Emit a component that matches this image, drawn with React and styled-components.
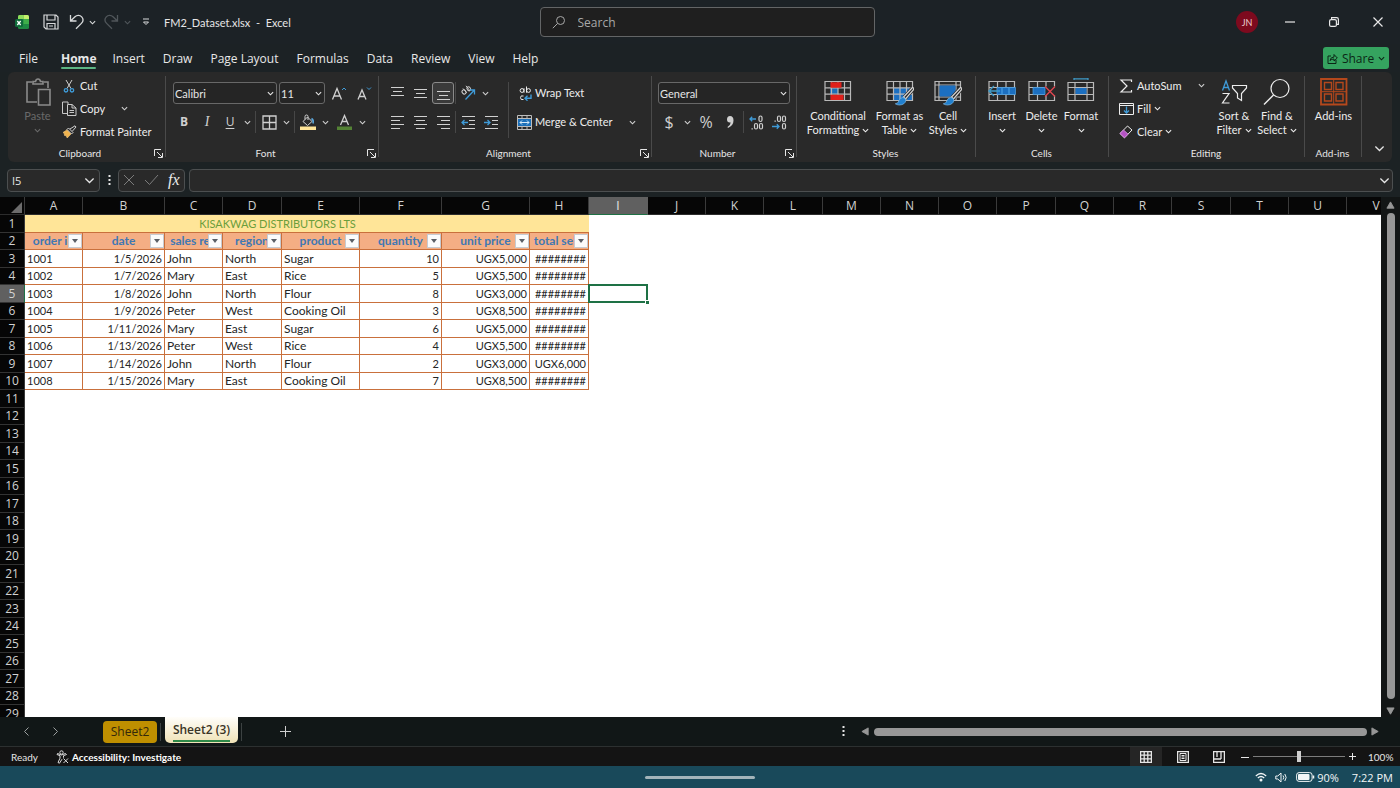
import React from "react";
import styled, { createGlobalStyle, css } from "styled-components";

const tabFont = '"Open Sans", "Noto Sans", sans-serif';
const uiFont = 'Lato, "Open Sans", sans-serif';
const cellFont = 'Lato, "Open Sans", sans-serif';

const Global = createGlobalStyle`
  *, *::before, *::after { box-sizing: border-box; }
  body { margin: 0; background: #1c2224; color: #e6e6e6; font-family: ${uiFont}; font-size: 11px; overflow: hidden; }
  button, input, select { font: inherit; color: inherit; margin: 0; padding: 0; border: 0; background: none; }
  button { cursor: pointer; }
`;

/* ---------- shell ---------- */
const Window = styled.div`
  display: flex;
  flex-direction: column;
  height: 100vh;
  background: #1c2224;
`;

const TitleBar = styled.header`
  display: grid;
  grid-template-columns: 1fr minmax(200px, 335px) 1fr;
  align-items: center;
  height: 44px;
  flex: none;
  padding-left: 14px;
  background: #1c2226;
`;

const TitleLeft = styled.div`
  display: flex;
  align-items: center;
`;

const QuickButton = styled.button`
  display: flex;
  align-items: center;
  justify-content: center;
  width: ${(p) => p.$w || 20}px;
  height: 22px;
  margin-left: ${(p) => p.$gap || 0}px;
  color: ${(p) => (p.$dim ? "#50565a" : "#d8dadb")};
`;

const DocTitle = styled.h1`
  margin: 0 0 0 8px;
  font-size: 11px;
  font-weight: 400;
  white-space: pre;
`;

const SearchBox = styled.label`
  display: flex;
  align-items: center;
  gap: 12px;
  height: 30px;
  padding: 0 12px 0 11px;
  border: 1px solid #636566;
  border-radius: 4px;
  background: #1f1f1f;
  color: #a8a8a8;
  font-family: ${tabFont};

  input {
    flex: 1;
    min-width: 0;
    outline: 0;
    font-size: 12px;
  }
  input::placeholder { color: #a8a8a8; opacity: 1; }
`;

const TitleRight = styled.div`
  display: flex;
  justify-content: flex-end;
  align-items: center;
`;

const Avatar = styled.button`
  width: 22px;
  height: 22px;
  margin-right: 10px;
  border-radius: 50%;
  background: #7d0a1e;
  color: #eccdd2;
  font-size: 9px;
`;

const WindowButton = styled.button`
  display: flex;
  align-items: center;
  justify-content: center;
  width: 44px;
  height: 30px;
  color: #e8e8e8;
`;

const TabBar = styled.nav`
  display: flex;
  align-items: center;
  height: 28px;
  flex: none;
  gap: 18px;
  padding: 0 11px 0 19px;
  font-family: ${tabFont};
  font-size: 12px;
  background: #1c2225;
`;

const MenuTab = styled.a`
  position: relative;
  padding-top: 2px;
  color: #e8e8e8;
  text-decoration: none;
  line-height: 20px;
  white-space: nowrap;
  ${(p) =>
    p.$active &&
    css`
      margin: 0 -2px 0 5px;
      font-weight: 700;
      &::after {
        content: "";
        position: absolute;
        left: 0;
        right: 0;
        bottom: 0;
        height: 2px;
        border-radius: 1px;
        background: #5cb584;
      }
    `}
`;

const ShareButton = styled.button`
  display: flex;
  align-items: center;
  justify-content: center;
  gap: 4px;
  width: 66px;
  height: 22px;
  margin-left: auto;
  border-radius: 3px;
  background: #35a35f;
  color: #0b2616;
`;

/* ---------- ribbon ---------- */
const Ribbon = styled.section`
  display: flex;
  flex: none;
  height: 90px;
  margin: 0 8px;
  border-radius: 6px;
  background: #292929;
`;

const GroupBox = styled.div`
  position: relative;
  display: flex;
  flex-direction: column;
  flex: none;
  width: ${(p) => p.$w}px;

  &::after {
    content: "";
    position: absolute;
    right: 0;
    top: 4px;
    bottom: 5px;
    width: 1px;
    background: #4a4a4a;
  }
`;

const GroupBody = styled.div`
  display: flex;
  height: 72px;
  padding: ${(p) => p.$pad || "2px 0 0 4px"};
`;

const GroupFooter = styled.div`
  display: flex;
  align-items: center;
  justify-content: center;
  height: 18px;
  padding-right: 2px;
  font-size: 10px;
  line-height: 16px;

  span { flex: 1; text-align: center; }
  button { display: flex; width: 12px; height: 12px; align-items: center; justify-content: center; }
`;

const Column = styled.div`
  display: flex;
  flex-direction: column;
  flex: none;
  width: ${(p) => (p.$w ? p.$w + "px" : "auto")};
  gap: ${(p) => p.$gap || 0}px;
`;

const Row = styled.div`
  display: flex;
  align-items: center;
  height: 22px;
  gap: ${(p) => (p.$gap === undefined ? 1 : p.$gap)}px;
`;

const IconButton = styled.button`
  display: flex;
  align-items: center;
  justify-content: center;
  flex: none;
  width: ${(p) => p.$w || 22}px;
  height: 22px;
  color: #d0d0d0;
  ${(p) =>
    p.$on &&
    css`
      border: 1px solid #8a8a8a;
      border-radius: 3px;
      background: #3a3a3a;
    `}
`;

const Split = styled.div`
  display: flex;
  flex: none;
  align-items: center;
  justify-content: space-between;
  width: ${(p) => (p.$w ? p.$w + "px" : "auto")};
`;

const Divider = styled.i`
  flex: none;
  width: 1px;
  height: ${(p) => p.$h || 22}px;
  margin: 0 ${(p) => (p.$m === undefined ? 1 : p.$m)}px;
  background: #474747;
`;

const LabelButton = styled.button`
  display: flex;
  align-items: center;
  gap: 3px;
  height: ${(p) => p.$h || 23}px;
  line-height: 16px;
  white-space: nowrap;
  color: #ededed;

  svg:first-child { flex: none; }
`;

const LargeButton = styled.button`
  display: flex;
  flex-direction: column;
  align-items: center;
  flex: none;
  width: ${(p) => p.$w}px;
  height: 70px;
  padding-top: 4px;
  line-height: 14px;
  color: ${(p) => (p.$dim ? "#6a6a6a" : "#ededed")};

  > svg { flex: none; margin-bottom: 3px; }
  span { display: flex; align-items: center; gap: 3px; height: 14px; white-space: nowrap; }
`;

const SelectBox = styled.label`
  display: grid;
  align-items: center;
  width: ${(p) => p.$w}px;
  height: 22px;
  border: 1px solid #686868;
  border-radius: 3px;
  background: #252525;

  select {
    grid-area: 1 / 1;
    width: 100%;
    height: 20px;
    padding-left: 1px;
    appearance: none;
    outline: 0;
  }
  svg { grid-area: 1 / 1; justify-self: end; margin-right: 2px; pointer-events: none; }
`;

const Letter = styled.span`
  font-family: ${(p) => (p.$italic ? '"Liberation Serif", serif' : tabFont)};
  font-size: ${(p) => p.$size || 12}px;
  line-height: 14px;
  font-weight: ${(p) => (p.$bold ? 700 : 400)};
  font-style: ${(p) => (p.$italic ? "italic" : "normal")};
  text-decoration: ${(p) => (p.$under ? "underline" : "none")};
  text-underline-offset: 2px;
`;

const CollapseButton = styled.button`
  display: flex;
  align-items: flex-end;
  justify-content: center;
  flex: 1;
  padding: 0 0 8px 4px;
`;

/* ---------- formula bar ---------- */
const FormulaBar = styled.div`
  display: flex;
  align-items: center;
  flex: none;
  height: 35px;
  padding: 1px 7px 0 7px;
`;

const NameBox = styled.label`
  display: flex;
  align-items: center;
  width: 93px;
  height: 23px;
  padding: 0 4px;
  border: 1px solid #4c4f50;
  border-radius: 4px;
  background: #292929;

  input { flex: 1; min-width: 0; outline: 0; font-family: ${tabFont}; }
`;

const DotsHandle = styled.button`
  display: flex;
  align-items: center;
  justify-content: center;
  width: 18px;
  height: 22px;
`;

const FormulaButtons = styled.div`
  display: flex;
  align-items: center;
  justify-content: space-around;
  width: 67px;
  height: 23px;
  border: 1px solid #4c4f50;
  border-radius: 4px;
  background: #292929;
  color: #7c7c7c;
  button { display: flex; }
`;

const FxText = styled.span`
  font: italic 400 16px/18px "Liberation Serif", serif;
  color: #ececec;
`;

const FormulaInput = styled.label`
  display: flex;
  flex: 1;
  align-items: center;
  height: 23px;
  margin-left: 4px;
  padding: 0 2px 0 4px;
  border: 1px solid #4c4f50;
  border-radius: 4px;
  background: #292929;
  input { flex: 1; min-width: 0; outline: 0; }
`;

/* ---------- sheet ---------- */
const SheetArea = styled.main`
  display: flex;
  flex: 1;
  min-height: 0;
`;

const SheetViewport = styled.div`
  flex: 1;
  min-width: 0;
  overflow: hidden;
  background: #fff;
`;

const Grid = styled.table`
  width: 0;
  table-layout: fixed;
  border-collapse: separate;
  border-spacing: 0;
  font-family: ${cellFont};
  font-size: 12px;
  color: #262626;

  tbody tr { height: 18px; }
  tbody tr:nth-child(even) { height: 17px; }
`;

const Col = styled.col`
  width: ${(p) => p.$w}px;
`;

const ColumnHead = styled.th`
  height: 18px;
  padding: 0;
  border-right: 1px solid ${(p) => (p.$on ? "#606060" : "#3a3a3a")};
  border-bottom: 1px solid ${(p) => (p.$on ? "#1e7145" : "#2c2c2c")};
  background: ${(p) => (p.$on ? "#606060" : "#060606")};
  color: ${(p) => (p.$on ? "#e8e8e8" : "#d2d2d2")};
  font: 400 12px/16px ${tabFont};
`;

const RowHead = styled.th`
  padding: 0;
  border-right: 1px solid ${(p) => (p.$on ? "#1e7145" : "#3a3a3a")};
  border-bottom: 1px solid #333;
  background: ${(p) => (p.$on ? "#606060" : "#060606")};
  color: #d2d2d2;
  font: 400 12px/16px ${tabFont};
`;

const Cell = styled.td`
  padding: 0 2px;
  overflow: hidden;
  white-space: nowrap;
  font-size: ${(p) => (p.$numeric ? 11 : 12)}px;
  line-height: 16px;
  text-align: ${(p) => p.$align || "left"};
  ${(p) =>
    p.$data &&
    css`
      border-right: 1px solid #c9703c;
      border-bottom: 1px solid #c9703c;
    `}
`;

const BannerCell = styled(Cell)`
  background: #ffe598;
  border-bottom: 1px solid #c9703c;
  color: #6b9e3c;
`;

const HeaderCell = styled.th`
  position: relative;
  padding: 0;
  overflow: hidden;
  border-right: 1px solid #c9703c;
  border-bottom: 1px solid #c9703c;
  background: #f4ae84;
  color: #3f78b4;
  font-weight: 700;
  line-height: 16px;
  white-space: nowrap;
`;

const FilterButton = styled.button`
  position: absolute;
  right: 0;
  top: 1px;
  display: flex;
  align-items: center;
  justify-content: center;
  width: 14px;
  height: 14px;
  border: 1px solid #c6cbd2;
  background: #fbfbfb;
`;

const SelectedCell = styled.td`
  position: relative;
  padding: 0;

  &::before {
    content: "";
    position: absolute;
    inset: -1px 0 0 -1px;
    border: 2px solid #1e7145;
  }
  &::after {
    content: "";
    position: absolute;
    right: -1px;
    bottom: -1px;
    width: 4px;
    height: 4px;
    border: 1px solid #fff;
    border-width: 1px 0 0 1px;
    background: #1e7145;
  }
`;

const VScroll = styled.div`
  display: flex;
  flex-direction: column;
  align-items: center;
  justify-content: space-between;
  flex: none;
  width: 19px;
  padding: 4px 0 1px;
  background: #131616;
`;

const Thumb = styled.div`
  flex: 1;
  border-radius: 4px;
  background: #979797;
  ${(p) => (p.$vertical ? "width: 8px; margin: 3px 0 8px;" : "height: 8px; margin: 0 4px;")}
`;

const ScrollArrow = styled.button`
  display: flex;
`;

/* ---------- bottom bars ---------- */
const SheetTabs = styled.div`
  display: flex;
  align-items: center;
  flex: none;
  height: 30px;
  padding: 0 20px 0 12px;
  border-bottom: 1px solid #2c3030;
  font-family: ${tabFont};
  background: #111717;
`;

const ArrowButton = styled.button`
  display: flex;
  align-items: center;
  justify-content: center;
  width: 29px;
  height: 22px;
  color: #9b9f9f;
`;

const SheetTab = styled.button`
  width: ${(p) => p.$w}px;
  height: 22px;
  border-radius: 4px;
  background: #bf8f00;
  color: #33280a;
  font-size: 12px;
  line-height: 18px;
  white-space: nowrap;
  ${(p) =>
    p.$active &&
    css`
      align-self: flex-start;
      height: 26px;
      border-radius: 0 0 5px 5px;
      background: linear-gradient(#fffefa, #f0e2b6);
      color: #3a3426;
      font-weight: 600;
      span { display: inline-block; padding-top: 2px; border-bottom: 2px solid #2f8a48; line-height: 20px; }
    `}
`;

const FirstTab = styled(SheetTab)`
  margin-left: 33px;
`;

const TabDivider = styled.i`
  width: 1px;
  height: 18px;
  margin: 0 4px 0 3px;
  background: #3c4242;
`;

const AddSheet = styled.button`
  display: flex;
  margin-left: 34px;
  color: #cfcfcf;
`;

const HScroll = styled.div`
  display: flex;
  align-items: center;
  width: calc(40% - 9px);
  margin-left: auto;
  button:first-child { margin-right: 11px; width: 8px; }
`;

const StatusBar = styled.footer`
  display: flex;
  align-items: center;
  flex: none;
  height: 19px;
  padding: 0 8px 0 11px;
  font-size: 10px;
  line-height: 16px;
  background: #141414;
`;

const AccessButton = styled.button`
  display: flex;
  align-items: center;
  gap: 3px;
  margin-left: 18px;
  font-weight: 700;
  color: #fff;
`;

const Spacer = styled.div`
  flex: 1;
`;

const ViewButton = styled.button`
  display: flex;
  align-items: center;
  justify-content: center;
  width: 32px;
  height: 19px;
  margin-right: ${(p) => p.$gap || 0}px;
  background: ${(p) => (p.$on ? "#252525" : "transparent")};
`;

const ZoomSlider = styled.input`
  && {
    width: 92px;
    height: 12px;
    margin: 0 4px;
    appearance: none;
    outline: 0;
  }
  &::-webkit-slider-runnable-track { height: 1px; background: #7c7c7c; }
  &::-webkit-slider-thumb {
    appearance: none;
    width: 4px;
    height: 11px;
    margin-top: -5px;
    background: #cfcfcf;
  }
`;

const ZoomButton = styled.button`
  display: flex;
`;

const ZoomValue = styled.button`
  && {
    width: 24px;
    margin-left: 12px;
  }
  white-space: nowrap;
`;

const TaskBar = styled.div`
  display: grid;
  grid-template-columns: 1fr 110px 1fr;
  align-items: center;
  flex: none;
  height: 22px;
  background: #19495a;
`;

const Grabber = styled.div`
  grid-column: 2;
  height: 3px;
  border-radius: 2px;
  background: #a3b4ba;
`;

const Tray = styled.div`
  display: flex;
  align-items: center;
  justify-content: flex-end;
  gap: 8px;
  padding-right: 7px;
  font-family: ${tabFont};
  font-size: 11px;
  white-space: nowrap;
  color: #f2f6f7;

  span { display: flex; align-items: center; gap: 2px; }
  time { margin-left: 5px; }
`;

/* ---------- icons ---------- */
const Svg = ({ w = 16, h = w, box, children, ...rest }) => (
  <svg width={w} height={h} viewBox={box || `0 0 ${w} ${h}`} fill="none" stroke="currentColor" strokeWidth="1" aria-hidden="true" {...rest}>
    {children}
  </svg>
);

const Chev = ({ w = 7 }) => (
  <Svg w={w} h={w} box="0 0 8 8">
    <path d="M1 2.500 4 5.500 7 2.500" strokeWidth={w > 8 ? 0.9 : 1.3} />
  </Svg>
);

const Launcher = () => (
  <Svg w={9}>
    <path d="M.5 7V.5H7M3 3l5 5M8.500 4v4.500H4" />
  </Svg>
);

const ExcelLogo = () => (
  <Svg w={16} stroke="none">
    <rect x="4" y="1" width="11" height="14" rx="1.500" fill="#1f8a43" />
    <path d="M5.500 1H9.500V5H4V2.500Q4 1 5.500 1Z" fill="#8fdc5a" />
    <path d="M9.500 1h4Q15 1 15 2.500V5H9.500z" fill="#c4f06c" />
    <rect x="9.500" y="5" width="5.500" height="5" fill="#3fae4a" />
    <rect x="1" y="5" width="8" height="8" rx="1.500" fill="#0f6b3a" />
    <path d="M3.300 7 6.700 11M6.700 7 3.300 11" stroke="#fff" strokeWidth="1.300" />
  </Svg>
);

const SaveIcon = () => (
  <Svg w={16}>
    <path d="M1 1h12l2 2v12H3l-2-2zM4 1v5h8V1M4 15V9.500h8V15M6 12h4" strokeWidth="1.200" />
  </Svg>
);

const UndoIcon = ({ flip }) => (
  <Svg w={15} h={16} transform={flip ? "scale(-1 1)" : undefined}>
    <path d="M1.500 1v6h6M1.800 6.800 6 2.700c2-1.900 5-1.700 6.700.2 1.700 2 1.500 4.700-.3 6.500L7 14.800" strokeWidth="1.300" />
  </Svg>
);

const CustomizeIcon = () => (
  <Svg w={8}>
    <path d="M1 1h6M1.500 4h5L4 6.500z" />
  </Svg>
);

const SearchIcon = () => (
  <Svg w={14}>
    <circle cx="8.500" cy="5.500" r="4" />
    <path d="M5.500 8.500.800 13.200" />
  </Svg>
);

const PasteIcon = () => (
  <Svg w={26} h={28} box="0 0 26 28" strokeWidth="1.600" stroke="#8a8a8a">
    <path d="M7 4H2v20h10M19 4h4v6" />
    <path d="M8 6V3.500h2.500Q11 1 13 1t2.500 2.500H18V6z" />
    <path d="M13.500 11.500H25V27H13.500z" />
  </Svg>
);

const CutIcon = () => (
  <Svg w={15} h={14} box="-1 0 15 14">
    <path d="M3 1 8 9.500M9 1 4 9.500" stroke="#cfcfcf" />
    <circle cx="3" cy="11.300" r="1.700" stroke="#3f9bd8" strokeWidth="1.300" />
    <circle cx="9" cy="11.300" r="1.700" stroke="#3f9bd8" strokeWidth="1.300" />
  </Svg>
);

const CopyIcon = () => (
  <Svg w={15} h={15} stroke="#c8c8c8">
    <path d="M5 12.500H.500V1H6v2" />
    <path d="M5.500 3.500H10L14 7v7.500H5.500zM10 3.500V7h4M7.500 9.500h4.500M7.500 11.500h4.500" />
  </Svg>
);

const PainterIcon = () => (
  <Svg w={15} h={14}>
    <path d="M8 4 13 .800l1 1.200-3.500 4" stroke="#d0d0d0" />
    <path d="M6.500 3 11 7.500 9.500 9 5 4.500z" fill="#292929" stroke="#d8d8d8" />
    <path d="M4.800 5 1 7.500l1.300 1 .2 2 1.700.3 1 2.200L9 9z" fill="#f0b34e" stroke="#f2c983" strokeWidth=".6" />
  </Svg>
);

const FontSizeIcon = ({ up }) => (
  <Svg w={16} h={15}>
    <path d={up ? "M1.500 13.500 6 2.500 10.500 13.500M3 10h6" : "M2 13.500 6 4 10 13.500M3.500 10.500h5"} strokeWidth="1.300" />
    <path d={up ? "M11 4 13 2l2 2" : "M11 1.500l2 2 2-2"} stroke="#3f9bd8" />
  </Svg>
);

const BordersIcon = () => (
  <Svg w={15}>
    <path d="M1 1h13v13H1zM7.500 1v13M1 7.500h13" strokeWidth="1.300" />
  </Svg>
);

const FillColorIcon = () => (
  <Svg w={16}>
    <path d="M3 7.500 7.500 3 12 7.500 7.500 11.500zM5 5.500V2.500Q5 1 6.500 1T8 2.500V6" />
    <path d="M11.500 4.500Q14 6 13 9.500" stroke="#5aa7dc" strokeWidth="1.500" />
    <rect x="0" y="12.500" width="16" height="3.500" fill="#ffe598" stroke="none" />
  </Svg>
);

const FontColorIcon = () => (
  <Svg w={15} h={16}>
    <path d="M3.500 11 7.500 1.500 11.500 11M5 7.500h5" strokeWidth="1.300" />
    <rect x="0" y="12.500" width="15" height="3.500" fill="#548235" stroke="none" />
  </Svg>
);

const alignPaths = {
  top: "M1 1.500h13M3 5.500h9M1 9.500h13",
  middle: "M1 3.500h13M3 7.500h9M1 11.500h13",
  bottom: "M1 5.500h13M3 9.500h9M1 13.500h13",
  left: "M1 1.500h13M1 5.500h9M1 9.500h13M1 13.500h9",
  center: "M1 1.500h13M3 5.500h9M1 9.500h13M3 13.500h9",
  right: "M1 1.500h13M5 5.500h9M1 9.500h13M5 13.500h9",
};
const AlignIcon = ({ kind }) => (
  <Svg w={15}>
    <path d={alignPaths[kind]} />
  </Svg>
);

const IndentIcon = ({ out }) => (
  <Svg w={15}>
    <path d="M1 1.500h13M8 5.500h6M8 9.500h6M1 13.500h13" />
    <path d={out ? "M7 7.500H1M3.500 5 1 7.500 3.500 10" : "M0 7.500h6M3.500 5 6 7.500 3.500 10"} stroke="#3f9bd8" strokeWidth="1.300" />
  </Svg>
);

const OrientationIcon = () => (
  <Svg w={16}>
    <ellipse cx="4" cy="7" rx="1.800" ry="2.200" transform="rotate(-40 4 7)" />
    <path d="M3 3.500 6.800 7.800M6 .800l4 5" />
    <ellipse cx="8.800" cy="3.800" rx="1.700" ry="2.100" transform="rotate(-40 8.800 3.800)" />
    <path d="M5.500 14.500 14 5.500M10 5h4.500v4.500" stroke="#3f9bd8" strokeWidth="1.300" />
  </Svg>
);

const WrapIcon = () => (
  <Svg w={15} h={15} box="-2 0 15 15">
    <circle cx="3" cy="4.500" r="1.900" />
    <path d="M5 2.300V6.700M7.500.500v6.200" />
    <circle cx="9.500" cy="4.500" r="1.900" />
    <path d="M4.500 10Q1.500 9 1.500 11.700T4.500 13.500" />
    <path d="M12 8.500v3.800H6M8.500 9.800 6 12.300l2.500 2.400" stroke="#3f9bd8" strokeWidth="1.400" />
  </Svg>
);

const MergeIcon = () => (
  <Svg w={15}>
    <path d="M.500.500h14v14H.500zM.500 3.500h14M.500 11.500h14M5 .500v3M10 .500v3M5 11.500v3M10 11.500v3" stroke="#bdbdbd" />
    <rect x="1" y="4" width="13" height="7" fill="#1c6fb8" stroke="none" />
    <path d="M3 7.500h9M5 5.500 3 7.500l2 2M10 5.500l2 2-2 2" stroke="#d5e9f8" />
  </Svg>
);

const DecimalIcon = ({ more }) => (
  <Svg w={16} h={15} strokeWidth="1.200">
    <path d={more ? "M8 4H2M4.200 1.800 2 4l2.200 2.200" : "M1 11.500h7M5.800 9.300 8 11.500l-2.200 2.200"} stroke="#3f9bd8" strokeWidth="1.300" />
    {more ? (
      <>
        <rect x="11" y="1" width="3" height="5.500" rx="1.500" />
        <rect x="6.500" y="8.500" width="3" height="5.500" rx="1.500" />
        <rect x="11.500" y="8.500" width="3" height="5.500" rx="1.500" />
        <path d="M3.500 13.800h1.300" />
      </>
    ) : (
      <>
        <rect x="6.500" y="1" width="3" height="5.500" rx="1.500" />
        <rect x="11.500" y="1" width="3" height="5.500" rx="1.500" />
        <rect x="11.500" y="8.500" width="3" height="5.500" rx="1.500" />
        <path d="M3.500 6.200h1.300" />
      </>
    )}
  </Svg>
);

const gridLines = "M1 3.500h25.500v19H1zM1 9.800h25.500M1 16.200h25.500M7.500 3.500v19M14 3.500v19M20.500 3.500v19";

const ConditionalIcon = () => (
  <Svg w={28} strokeWidth="1.200">
    <rect x="6" y="10" width="8" height="6" fill="#1c6fb8" stroke="none" />
    <path d={gridLines} stroke="#b9b9b9" />
    <path d="M6.500 4.200h11v5.500h-11zM6.500 16.800h13v5.200h-13z" fill="#e0201b" stroke="none" />
  </Svg>
);

const Brush = () => (
  <>
    <path d="M27 10.500 18.500 20" stroke="#292929" strokeWidth="5" />
    <path d="M26.500 9.500q2 .5.800 2.500L19.500 21l-2-2z" fill="#292929" stroke="#d6d6d6" />
    <path d="M16.800 19.500q3 .3 3 3-.8 4.300-6.500 4.500-3-.2-4-1.200 3-.3 3.500-2.800.8-3.200 4-3.500z" fill="#2180cf" stroke="#79b8e6" strokeWidth=".7" />
  </>
);

const FormatTableIcon = () => (
  <Svg w={28} strokeWidth="1.200">
    <path d="M8 10h18v12H8z" fill="#1c6fc0" stroke="none" />
    <path d={gridLines} stroke="#b9b9b9" />
    <Brush />
  </Svg>
);

const CellStylesIcon = () => (
  <Svg w={28} strokeWidth="1.200">
    <path d="M1 3.500h25.500v19H1zM1 7h25.500M1 19h25.500M5 3.500v19M22 3.500v19" stroke="#b9b9b9" />
    <path d="M5.500 7.500h16v11h-16z" fill="#1c6fc0" stroke="none" />
    <Brush />
  </Svg>
);

const InsertIcon = () => (
  <Svg w={28} strokeWidth="1.200">
    <path d="M1 3.500h25.500v19H1zM1 9.500h25.500M1 16.500h25.500M9.500 3.500v19M18 3.500v19" stroke="#b9b9b9" />
    <path d="M9 9.500h18.500v7H9z" fill="#1c6fc0" stroke="#4aa0e2" strokeWidth=".7" />
    <path d="M14 9.500v7M21 9.500v7" stroke="#4aa0e2" />
    <path d="M12 13H1M6 8 1 13l5 5" stroke="#3f9bc8" strokeWidth="1.400" />
  </Svg>
);

const DeleteIcon = () => (
  <Svg w={28} strokeWidth="1.200">
    <path d="M1 3.500h25.500v19H1zM1 9.500h25.500M1 16.500h25.500M9.500 3.500v19M18 3.500v19" stroke="#b9b9b9" />
    <path d="M16.500 8.500h12v9h-12z" fill="#292929" stroke="none" />
    <path d="M5 9.500h12v7H5z" fill="#1c6fc0" stroke="#4aa0e2" strokeWidth=".7" />
    <path d="M17 8.500 27 18.500M27 8.500 17 18.500" stroke="#e0454f" strokeWidth="1.400" />
  </Svg>
);

const FormatIcon = () => (
  <Svg w={28} strokeWidth="1.200">
    <path d="M1 4.500h25.500v18H1zM1 9.500h25.500M1 16.500h25.500M8 4.500v18M20 4.500v18" stroke="#b9b9b9" />
    <path d="M8.500 10h11v6h-11z" fill="#1c6fc0" stroke="none" />
    <path d="M7 .800h14M7 0v2M21 0v2" stroke="#3f9bc8" />
  </Svg>
);

const SigmaIcon = () => (
  <Svg w={15} h={14}>
    <path d="M12.500 3V1H2L8 7 2 13h10.500v-2" strokeWidth="1.200" />
  </Svg>
);

const FillIcon = () => (
  <Svg w={15} h={14}>
    <path d="M.500 1.500h14v11H.500zM.500 3.500h14" />
    <path d="M7.500 4.500v6.500M5 8.500 7.500 11 10 8.500" stroke="#3f9bd8" strokeWidth="1.300" />
  </Svg>
);

const ClearIcon = () => (
  <Svg w={15} h={14}>
    <path d="M1 8.500 8.500 1 13 5 5.500 12.800z" />
    <path d="M1 8.500 4.500 5 9 9.200 5.500 12.800z" fill="#b552c4" stroke="#cf86d9" />
  </Svg>
);

const SortIcon = () => (
  <Svg w={28}>
    <path d="M2.500 12.500 6 3l3.500 9.500M3.700 9.500h4.600" stroke="#3f9bd8" strokeWidth="1.300" />
    <path d="M2.500 15.500H9l-6.500 9.500h7" strokeWidth="1.200" />
    <path d="M12.500 7.500h14V10L21.500 15.500v7l-4-2.500v-4.500l-5-5.500z" strokeWidth="1.200" />
  </Svg>
);

const FindIcon = () => (
  <Svg w={28} h={28}>
    <circle cx="17" cy="10.500" r="9" strokeWidth="1.200" />
    <path d="M10.500 17 1 26.500" strokeWidth="1.400" />
  </Svg>
);

const AddinsIcon = () => (
  <Svg w={28} stroke="#b5481c">
    <path d="M1 1h25.500v25.500H1z" strokeWidth="1.800" />
    <path d="M4.500 4.500h7v7h-7zM16 4.500h7v7h-7zM4.500 16h7v7h-7zM16 16h7v7h-7z" strokeWidth="1.400" />
    <path d="M13.700 2v24M2 13.700h24" strokeWidth="1" />
  </Svg>
);

const Dots = () => (
  <Svg w={3} h={11} fill="currentColor" stroke="none">
    <rect x=".5" y="0" width="2" height="2" />
    <rect x=".5" y="4" width="2" height="2" />
    <rect x=".5" y="8" width="2" height="2" />
  </Svg>
);

const arrowPoints = { up: "M5 1 9 8H1z", down: "M1 1h8L5 8z", left: "M8 1v8L1 5z", right: "M1 1v8l7-4z" };
const Arrow = ({ dir }) => (
  <Svg w={9} box="0 0 10 10" fill="#979797" stroke="#979797" strokeLinejoin="round">
    <path d={arrowPoints[dir]} />
  </Svg>
);

/* ---------- ribbon groups ---------- */
const Group = ({ name, w, pad, launch, children }) => (
  <GroupBox $w={w} role="group" aria-label={name}>
    <GroupBody $pad={pad}>{children}</GroupBody>
    <GroupFooter>
      <span>{name}</span>
      {launch && (
        <button aria-label={`${name} settings`}>
          <Launcher />
        </button>
      )}
    </GroupFooter>
  </GroupBox>
);

const DropButton = ({ w = 12, label }) => (
  <IconButton $w={w} aria-label={label}>
    <Chev />
  </IconButton>
);

const DropSelect = ({ w, label, value }) => (
  <SelectBox $w={w}>
    <select aria-label={label} defaultValue={value}>
      <option>{value}</option>
    </select>
    <Chev />
  </SelectBox>
);

const Big = ({ w, icon, lines, drop }) => (
  <LargeButton $w={w}>
    {icon}
    {lines.map((line, i) => (
      <span key={i}>
        {line}
        {drop && i === lines.length - 1 && <Chev />}
      </span>
    ))}
  </LargeButton>
);

const RibbonBar = () => (
  <Ribbon aria-label="Home ribbon">
    <Group name="Clipboard" w={158} pad="2px 0 0 5px" launch>
      <LargeButton $w={49} $dim>
        <PasteIcon />
        <span>Paste</span>
        <span><Chev /></span>
      </LargeButton>
      <Column>
        <LabelButton><CutIcon />Cut</LabelButton>
        <Split $w={68}>
          <LabelButton><CopyIcon />Copy</LabelButton>
          <DropButton label="Copy options" />
        </Split>
        <LabelButton><PainterIcon />Format Painter</LabelButton>
      </Column>
    </Group>

    <Group name="Font" w={213} pad="10px 0 0 7px" launch>
      <Column $gap={7}>
        <Row $gap={2}>
          <DropSelect w={104} label="Font name" value="Calibri" />
          <DropSelect w={46} label="Font size" value="11" />
          <IconButton $w={23} aria-label="Increase font size"><FontSizeIcon up /></IconButton>
          <IconButton $w={23} aria-label="Decrease font size"><FontSizeIcon /></IconButton>
        </Row>
        <Row>
          <IconButton aria-label="Bold"><Letter $bold>B</Letter></IconButton>
          <IconButton aria-label="Italic"><Letter $italic $size={14}>I</Letter></IconButton>
          <Split>
            <IconButton aria-label="Underline"><Letter $under>U</Letter></IconButton>
            <DropButton label="Underline options" />
          </Split>
          <Divider />
          <Split>
            <IconButton aria-label="Borders"><BordersIcon /></IconButton>
            <DropButton label="Border options" />
          </Split>
          <Divider />
          <Split>
            <IconButton aria-label="Fill color"><FillColorIcon /></IconButton>
            <DropButton label="Fill color options" />
          </Split>
          <Split>
            <IconButton $w={24} aria-label="Font color"><FontColorIcon /></IconButton>
            <DropButton label="Font color options" />
          </Split>
        </Row>
      </Column>
    </Group>

    <Group name="Alignment" w={273} pad="10px 0 0 7px" launch>
      <Column $w={122} $gap={7}>
        <Row>
          <IconButton aria-label="Top align"><AlignIcon kind="top" /></IconButton>
          <IconButton aria-label="Middle align"><AlignIcon kind="middle" /></IconButton>
          <IconButton $on aria-label="Bottom align"><AlignIcon kind="bottom" /></IconButton>
          <Divider $m={0} />
          <Split>
            <IconButton aria-label="Orientation"><OrientationIcon /></IconButton>
            <DropButton label="Orientation options" />
          </Split>
        </Row>
        <Row>
          <IconButton aria-label="Align left"><AlignIcon kind="left" /></IconButton>
          <IconButton aria-label="Center"><AlignIcon kind="center" /></IconButton>
          <IconButton aria-label="Align right"><AlignIcon kind="right" /></IconButton>
          <Divider $m={0} />
          <IconButton aria-label="Decrease indent"><IndentIcon out /></IconButton>
          <IconButton aria-label="Increase indent"><IndentIcon /></IconButton>
        </Row>
      </Column>
      <Divider $h={56} $m={0} />
      <Column $gap={7}>
        <Row $gap={8}>
          <i />
          <LabelButton $h={22}><WrapIcon />Wrap Text</LabelButton>
        </Row>
        <Row $gap={8}>
          <i />
          <Split $w={121}>
            <LabelButton $h={22}><MergeIcon />Merge &amp; Center</LabelButton>
            <DropButton label="Merge options" />
          </Split>
        </Row>
      </Column>
    </Group>

    <Group name="Number" w={145} pad="10px 0 0 6px" launch>
      <Column $gap={7}>
        <DropSelect w={132} label="Number format" value="General" />
        <Row>
          <Split>
            <IconButton aria-label="Currency"><Letter $size={16}>$</Letter></IconButton>
            <DropButton w={14} label="Currency options" />
          </Split>
          <IconButton aria-label="Percent"><Letter $size={16}>%</Letter></IconButton>
          <IconButton $w={24} aria-label="Comma style">
            <Svg w={8} h={14} fill="currentColor" stroke="none"><path d="M4 1q3.500 0 3.500 4.500 0 5-5.500 7.500l-.5-1Q4.500 10 4.700 7.500 1 8 1 4.500 1 1 4 1z" /></Svg>
          </IconButton>
          <Divider $m={0} />
          <IconButton aria-label="Increase decimal"><DecimalIcon more /></IconButton>
          <IconButton aria-label="Decrease decimal"><DecimalIcon /></IconButton>
        </Row>
      </Column>
    </Group>

    <Group name="Styles" w={179} pad="2px 0 0 5px">
      <Big w={72} icon={<ConditionalIcon />} lines={["Conditional", "Formatting"]} drop />
      <Big w={51} icon={<FormatTableIcon />} lines={["Format as", "Table"]} drop />
      <Big w={46} icon={<CellStylesIcon />} lines={["Cell", "Styles"]} drop />
    </Group>

    <Group name="Cells" w={133} pad="2px 0 0 6px">
      <Big w={40} icon={<InsertIcon />} lines={["Insert", ""]} drop />
      <Big w={39} icon={<DeleteIcon />} lines={["Delete", ""]} drop />
      <Big w={40} icon={<FormatIcon />} lines={["Format", ""]} drop />
    </Group>

    <Group name="Editing" w={196} pad="2px 0 0 10px">
      <Column $w={94}>
        <Split $w={88}>
          <LabelButton><SigmaIcon />AutoSum</LabelButton>
          <DropButton label="AutoSum options" />
        </Split>
        <LabelButton><FillIcon />Fill<Chev /></LabelButton>
        <LabelButton><ClearIcon />Clear<Chev /></LabelButton>
      </Column>
      <Big w={42} icon={<SortIcon />} lines={["Sort &", "Filter"]} drop />
      <Big w={44} icon={<FindIcon />} lines={["Find &", "Select"]} drop />
    </Group>

    <Group name="Add-ins" w={57} pad="2px 0 0 0">
      <Big w={57} icon={<AddinsIcon />} lines={["Add-ins"]} />
    </Group>

    <CollapseButton aria-label="Collapse ribbon">
      <Chev w={11} />
    </CollapseButton>
  </Ribbon>
);

/* ---------- sheet data ---------- */
const columns = [
  ["A", 58], ["B", 82], ["C", 58], ["D", 59], ["E", 78], ["F", 82], ["G", 88], ["H", 59], ["I", 59],
  ["J", 58], ["K", 58], ["L", 59], ["M", 58], ["N", 58], ["O", 58], ["P", 59], ["Q", 58], ["R", 58],
  ["S", 59], ["T", 58], ["U", 58], ["V", 59],
];
const headers = ["order id", "date", "sales rep", "region", "product", "quantity", "unit price", "total sells"];
const aligns = ["left", "right", "left", "left", "left", "right", "right", "right"];
const numericColumns = [0, 1, 5, 6, 7];
const records = [
  ["1001", "1/5/2026", "John", "North", "Sugar", "10", "UGX5,000", "########"],
  ["1002", "1/7/2026", "Mary", "East", "Rice", "5", "UGX5,500", "########"],
  ["1003", "1/8/2026", "John", "North", "Flour", "8", "UGX3,000", "########"],
  ["1004", "1/9/2026", "Peter", "West", "Cooking Oil", "3", "UGX8,500", "########"],
  ["1005", "1/11/2026", "Mary", "East", "Sugar", "6", "UGX5,000", "########"],
  ["1006", "1/13/2026", "Peter", "West", "Rice", "4", "UGX5,500", "########"],
  ["1007", "1/14/2026", "John", "North", "Flour", "2", "UGX3,000", "UGX6,000"],
  ["1008", "1/15/2026", "Mary", "East", "Cooking Oil", "7", "UGX8,500", "########"],
];
const emptyRows = Array.from({ length: 19 }, (_, i) => i + 11);

const SelectAllMark = styled.svg`
  display: block;
`;

const Sheet = () => (
  <Grid>
    <colgroup>
      <Col $w={25} />
      {columns.map(([name, w]) => <Col key={name} $w={w} />)}
    </colgroup>
    <thead>
      <tr>
        <ColumnHead aria-label="Select all">
          <SelectAllMark width="24" height="16" viewBox="0 0 24 16"><path d="M22 4v11H11z" fill="#6c6c6c" /></SelectAllMark>
        </ColumnHead>
        {columns.map(([name]) => <ColumnHead key={name} $on={name === "I"}>{name}</ColumnHead>)}
      </tr>
    </thead>
    <tbody>
      <tr>
        <RowHead>1</RowHead>
        <BannerCell colSpan={7} $numeric $align="center">KISAKWAG DISTRIBUTORS LTS</BannerCell>
        <BannerCell />
      </tr>
      <tr>
        <RowHead>2</RowHead>
        {headers.map((h) => (
          <HeaderCell key={h}>
            {h}
            <FilterButton aria-label={`Filter ${h}`}>
              <Svg w={6} h={4} stroke="none"><path d="M0 0h6L3 4z" fill="#5a5f66" /></Svg>
            </FilterButton>
          </HeaderCell>
        ))}
      </tr>
      {records.map((rec, r) => (
        <tr key={rec[0]}>
          <RowHead $on={r === 2}>{r + 3}</RowHead>
          {rec.map((value, c) => (
            <Cell key={c} $data $align={aligns[c]} $numeric={numericColumns.includes(c)}>{value}</Cell>
          ))}
          {r === 2 && <SelectedCell />}
        </tr>
      ))}
      {emptyRows.map((n) => (
        <tr key={n}>
          <RowHead>{n}</RowHead>
        </tr>
      ))}
    </tbody>
  </Grid>
);

const menu = ["File", "Home", "Insert", "Draw", "Page Layout", "Formulas", "Data", "Review", "View", "Help"];

export default function App() {
  return (
    <Window>
      <Global />
      <TitleBar>
        <TitleLeft>
          <ExcelLogo />
          <QuickButton $gap={11} aria-label="Save"><SaveIcon /></QuickButton>
          <QuickButton $gap={5} aria-label="Undo"><UndoIcon /></QuickButton>
          <QuickButton $w={12} aria-label="Undo history"><Chev /></QuickButton>
          <QuickButton $gap={3} $dim aria-label="Redo"><UndoIcon flip /></QuickButton>
          <QuickButton $w={12} $dim aria-label="Redo history"><Chev /></QuickButton>
          <QuickButton $w={20} $gap={3} aria-label="Customize toolbar"><CustomizeIcon /></QuickButton>
          <DocTitle>FM2_Dataset.xlsx  -  Excel</DocTitle>
        </TitleLeft>
        <SearchBox>
          <SearchIcon />
          <input type="text" placeholder="Search" aria-label="Search" />
        </SearchBox>
        <TitleRight>
          <Avatar>JN</Avatar>
          <WindowButton aria-label="Minimize"><Svg w={10}><path d="M0 5h10" strokeWidth="1.200" /></Svg></WindowButton>
          <WindowButton aria-label="Restore">
            <Svg w={10}><rect x=".6" y="2.600" width="6.800" height="6.800" rx="1.500" strokeWidth="1.200" /><path d="M2.600 2V.600h5q1.800 0 1.800 1.800v5H8" strokeWidth="1.200" /></Svg>
          </WindowButton>
          <WindowButton aria-label="Close"><Svg w={10}><path d="M.5.5l9 9M9.500.5l-9 9" strokeWidth="1.200" /></Svg></WindowButton>
        </TitleRight>
      </TitleBar>
      <TabBar aria-label="Ribbon tabs">
        {menu.map((m) => <MenuTab key={m} href="#" $active={m === "Home"}>{m}</MenuTab>)}
        <ShareButton>
          <Svg w={11}><path d="M4 3H1v7.500h8V7M3 7.500Q3.500 4 7 4V1.500L10.300 5 7 8V6Q4.500 6 3 7.500z" /></Svg>
          Share
          <Chev />
        </ShareButton>
      </TabBar>
      <RibbonBar />
      <FormulaBar>
        <NameBox>
          <input type="text" defaultValue="I5" aria-label="Name box" />
          <Chev w={11} />
        </NameBox>
        <DotsHandle aria-label="Resize name box"><Dots /></DotsHandle>
        <FormulaButtons>
          <button aria-label="Cancel"><Svg w={12}><path d="M1 1l10 10M11 1 1 11" /></Svg></button>
          <button aria-label="Enter"><Svg w={15} h={12}><path d="M1 6l4.500 4.500L14 1" /></Svg></button>
          <button aria-label="Insert function"><FxText>fx</FxText></button>
        </FormulaButtons>
        <FormulaInput>
          <input type="text" aria-label="Formula" />
          <Chev w={11} />
        </FormulaInput>
      </FormulaBar>
      <SheetArea>
        <SheetViewport><Sheet /></SheetViewport>
        <VScroll>
          <ScrollArrow aria-label="Scroll up"><Arrow dir="up" /></ScrollArrow>
          <Thumb $vertical />
          <ScrollArrow aria-label="Scroll down"><Arrow dir="down" /></ScrollArrow>
        </VScroll>
      </SheetArea>
      <SheetTabs>
        <ArrowButton aria-label="Previous sheet"><Svg w={7} h={9}><path d="M5.500.5 1.500 4.500l4 4" /></Svg></ArrowButton>
        <ArrowButton aria-label="Next sheet"><Svg w={7} h={9}><path d="M1.500.5l4 4-4 4" /></Svg></ArrowButton>
        <FirstTab $w={54}>Sheet2</FirstTab>
        <TabDivider />
        <SheetTab $w={73} $active><span>Sheet2 (3)</span></SheetTab>
        <TabDivider />
        <AddSheet aria-label="New sheet"><Svg w={11}><path d="M5.500 0v11M0 5.500h11" /></Svg></AddSheet>
        <HScroll>
          <ScrollArrow aria-label="Resize tab bar"><Dots /></ScrollArrow>
          <ScrollArrow aria-label="Scroll left"><Arrow dir="left" /></ScrollArrow>
          <Thumb />
          <ScrollArrow aria-label="Scroll right"><Arrow dir="right" /></ScrollArrow>
        </HScroll>
      </SheetTabs>
      <StatusBar>
        <span>Ready</span>
        <AccessButton>
          <Svg w={13} h={14} stroke="#dcdcdc">
            <circle cx="5.500" cy="2.500" r="1.700" />
            <path d="M1 4.500l3 1.200v2.500L2 12.500l1.500.7 2.500-4M10.500 4.500l-3 1.200v2M1 4.500l.5-1L5.500 5l4-1.500 1 1M7.500 8.500l4.500 4.500M12 8.500 7.500 13" />
          </Svg>
          Accessibility: Investigate
        </AccessButton>
        <Spacer />
        <ViewButton $on $gap={5} aria-label="Normal view"><Svg w={12} strokeWidth="1.300"><path d="M.6.6h10.800v10.800H.6zM4.200.6v10.800M7.800.6v10.800M.6 4.200h10.800M.6 7.800h10.800" /></Svg></ViewButton>
        <ViewButton $gap={4} aria-label="Page layout view"><Svg w={12}><path d="M.6.6h10.800v10.800H.6z" strokeWidth="1.300" /><path d="M3 2.500h6v7H3zM4.500 4.500h3M4.500 6h3M4.500 7.500h3" /></Svg></ViewButton>
        <ViewButton $gap={6} aria-label="Page break view"><Svg w={12}><path d="M.6.6h10.800v10.800H.6zM4 .6v5.400M8 .6V8M.6 8H8" strokeWidth="1.300" /></Svg></ViewButton>
        <ZoomButton aria-label="Zoom out"><Svg w={8}><path d="M0 4.500h8" /></Svg></ZoomButton>
        <ZoomSlider type="range" defaultValue="50" aria-label="Zoom" />
        <ZoomButton aria-label="Zoom in"><Svg w={7}><path d="M0 3.500h7M3.500 0v7" /></Svg></ZoomButton>
        <ZoomValue>100%</ZoomValue>
      </StatusBar>
      <TaskBar>
        <Grabber />
        <Tray>
          <Svg w={12} h={10}><path d="M.8 4Q6-1 11.200 4M2.800 6Q6 3 9.200 6" strokeWidth="1.200" /><circle cx="6" cy="8" r="1.500" fill="currentColor" stroke="none" /></Svg>
          <Svg w={13} h={11}><path d="M.8 4h2L6 1v9L2.800 7h-2zM8 3.500q1.500 2 0 4M9.800 2q2.700 3.500 0 7" /></Svg>
          <span>
            <Svg w={19} h={10}><rect x=".6" y=".6" width="15.500" height="8.800" rx="2.500" /><rect x="2" y="2" width="11.500" height="6" rx="1" fill="currentColor" stroke="none" /><path d="M17.500 3.500v3" strokeWidth="1.500" /></Svg>
            90%
          </span>
          <time>7:22 PM</time>
        </Tray>
      </TaskBar>
    </Window>
  );
}
